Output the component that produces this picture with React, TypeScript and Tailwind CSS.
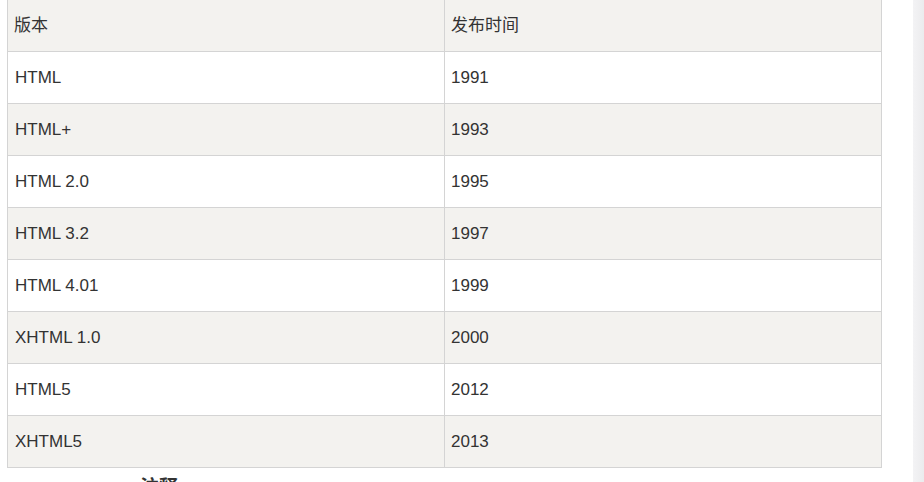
const rows = [
  { v: "HTML", y: "1991" },
  { v: "HTML+", y: "1993" },
  { v: "HTML 2.0", y: "1995" },
  { v: "HTML 3.2", y: "1997" },
  { v: "HTML 4.01", y: "1999" },
  { v: "XHTML 1.0", y: "2000" },
  { v: "HTML5", y: "2012" },
  { v: "XHTML5", y: "2013" },
];

export default function App() {
  return (
    <div className="flex w-[924px] h-[482px] overflow-hidden bg-white text-[#333] text-[17px] font-['Liberation_Sans','Noto_Sans_CJK_SC',sans-serif]">
      <div className="flex-1 pl-[7px]">
        <div className="w-[875px] -mt-px border-l border-r border-t border-[#d4d4d4]">
          <div className="flex h-[52px] border-b border-[#d4d4d4] bg-[#f3f2ef]">
            <div className="w-[437px] border-r border-[#d4d4d4] pl-[6px] flex items-center">版本</div>
            <div className="flex-1 pl-[6px] flex items-center">发布时间</div>
          </div>
          {rows.map((r, i) => (
            <div
              key={r.v}
              className={`flex h-[52px] border-b border-[#d4d4d4] ${i % 2 === 1 ? "bg-[#f3f2ef]" : "bg-white"}`}
            >
              <div className="w-[437px] border-r border-[#d4d4d4] pl-[7px] flex items-center">{r.v}</div>
              <div className="flex-1 pl-[6px] flex items-center">{r.y}</div>
            </div>
          ))}
        </div>
        <div className="pl-[133px] mt-[10px] text-[19px] font-bold leading-none">注释</div>
      </div>
      <div className="w-[11px] h-full bg-gradient-to-r from-[#f3f3f5] to-[#ebebed]" />
    </div>
  );
}
